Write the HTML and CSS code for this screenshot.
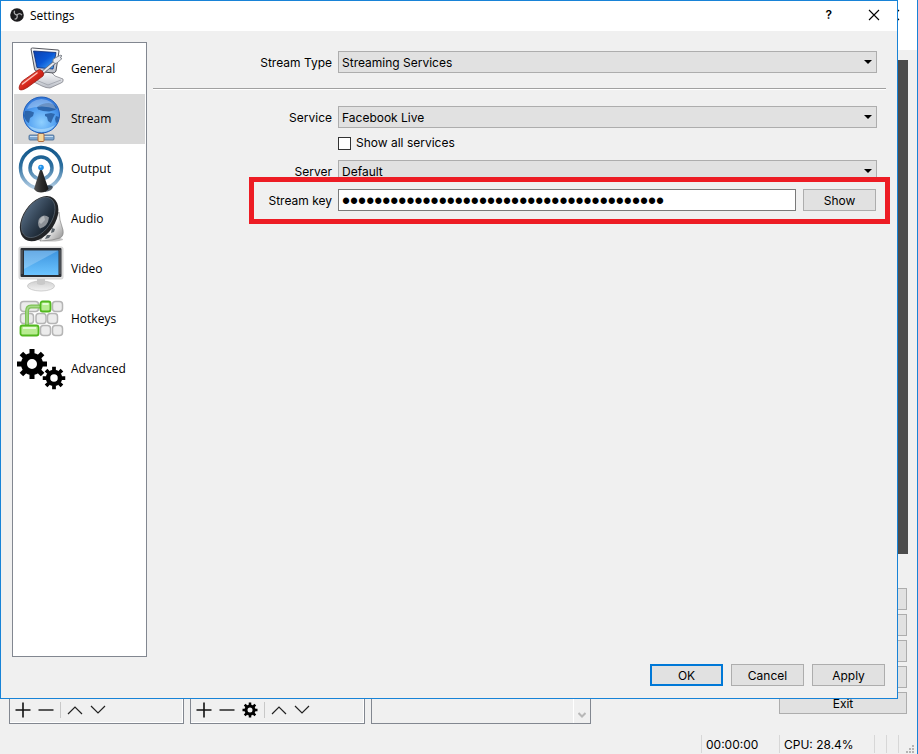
FILE: index.html
```html
<!DOCTYPE html>
<html lang="en">
<head>
    <meta charset="UTF-8">
    <meta name="viewport" content="width=device-width, initial-scale=1.0">
    <title>Settings</title>
    <link rel="stylesheet" href="styles.css">
</head>
<body>
    <!-- Shared shapes -->
    <svg class="sprites" width="0" height="0" aria-hidden="true">
        <symbol id="gear" viewBox="-16 -16 32 32">
            <circle r="8" fill="none" stroke="#000" stroke-width="6"/>
            <path d="M0-15V-10M0 15V10M-15 0H-10M15 0H10M-10.6-10.6L-7-7M10.6 10.6L7 7M-10.6 10.6L-7 7M10.6-10.6L7-7" stroke="#000" stroke-width="5"/>
        </symbol>
        <symbol id="plus" viewBox="0 0 16 16"><path d="M8 .5v15M.5 8h15" stroke="#111" stroke-width="1.6"/></symbol>
        <symbol id="minus" viewBox="0 0 16 16"><path d="M.5 8h15" stroke="#333" stroke-width="1.6"/></symbol>
        <symbol id="up" viewBox="0 0 16 16"><path d="M1 12l7-7 7 7" fill="none" stroke="#222" stroke-width="1.2"/></symbol>
        <symbol id="down" viewBox="0 0 16 16"><path d="M1 4l7 7 7-7" fill="none" stroke="#222" stroke-width="1.2"/></symbol>
        <symbol id="cross" viewBox="0 0 12 12"><path d="M1 1l10 10M11 1L1 11" stroke="#000" stroke-width="1.1"/></symbol>
    </svg>

    <!-- Main window, behind the dialog -->
    <div class="main-window">
        <div class="main-title">
            <button class="icon-btn" aria-label="Close main window"><svg width="12" height="12"><use href="#cross"/></svg></button>
        </div>
        <div class="preview"></div>
        <div class="docks">
            <div class="dock">
                <div class="toolbar">
                    <button class="icon-btn" aria-label="Add scene"><svg width="16" height="16"><use href="#plus"/></svg></button>
                    <button class="icon-btn" aria-label="Remove scene"><svg width="16" height="16"><use href="#minus"/></svg></button>
                    <span class="tool-sep"></span>
                    <button class="icon-btn" aria-label="Move scene up"><svg width="16" height="16"><use href="#up"/></svg></button>
                    <button class="icon-btn" aria-label="Move scene down"><svg width="16" height="16"><use href="#down"/></svg></button>
                </div>
            </div>
            <div class="dock">
                <div class="toolbar">
                    <button class="icon-btn" aria-label="Add source"><svg width="16" height="16"><use href="#plus"/></svg></button>
                    <button class="icon-btn" aria-label="Remove source"><svg width="16" height="16"><use href="#minus"/></svg></button>
                    <button class="icon-btn" aria-label="Source properties"><svg width="16" height="16"><use href="#gear"/></svg></button>
                    <span class="tool-sep"></span>
                    <button class="icon-btn" aria-label="Move source up"><svg width="16" height="16"><use href="#up"/></svg></button>
                    <button class="icon-btn" aria-label="Move source down"><svg width="16" height="16"><use href="#down"/></svg></button>
                </div>
            </div>
            <div class="dock mixer">
                <div class="scroll-track">
                    <svg width="8" height="6" viewBox="0 0 8 6"><path d="M.5 1L4 4.5 7.5 1" fill="none" stroke="#b8b8b8" stroke-width="2"/></svg>
                </div>
            </div>
            <div class="controls">
                <button class="btn" aria-label="Start Streaming"></button>
                <button class="btn" aria-label="Start Recording"></button>
                <button class="btn" aria-label="Studio Mode"></button>
                <button class="btn" aria-label="Open Settings"></button>
                <button class="btn">Exit</button>
            </div>
        </div>
        <footer class="statusbar">
            <span class="status time">00:00:00</span>
            <span class="status cpu">CPU: 28.4%</span>
            <span class="status slot"></span>
            <span class="status slot"></span>
            <span class="status grip">
                <svg width="8" height="8" viewBox="0 0 8 8" fill="#b4b4b4"><path d="M6 0h2v2H6zM3 3h2v2H3zM6 3h2v2H6zM0 6h2v2H0zM3 6h2v2H3zM6 6h2v2H6z"/></svg>
            </span>
        </footer>
    </div>

    <!-- Settings dialog -->
    <div class="dialog" role="dialog" aria-labelledby="dialog-title">
        <header class="titlebar">
            <svg width="14" height="14" viewBox="0 0 14 14">
                <circle cx="7" cy="7" r="6.8" fill="#1c1b1d"/>
                <g fill="none" stroke="#a9a9ab" stroke-width="1.3">
                    <path d="M7 7C4.600 6.500 3.600 4.800 4.600 2.800"/>
                    <path d="M7 7C4.600 6.500 3.600 4.800 4.600 2.800" transform="rotate(120 7 7)"/>
                    <path d="M7 7C4.600 6.500 3.600 4.800 4.600 2.800" transform="rotate(240 7 7)"/>
                </g>
            </svg>
            <h1 id="dialog-title">Settings</h1>
            <button class="icon-btn help" aria-label="Help">?</button>
            <button class="icon-btn" aria-label="Close"><svg width="12" height="12"><use href="#cross"/></svg></button>
        </header>

        <div class="dialog-body">
            <nav class="sidebar">
                <a href="#general">
                    <svg width="50" height="50" viewBox="0 0 50 50">
                        <defs>
                            <linearGradient id="scr" x1="0" y1="0" x2="1" y2="1"><stop offset="0" stop-color="#0b3fae"/><stop offset=".5" stop-color="#0a58d6"/><stop offset="1" stop-color="#4fb4ff"/></linearGradient>
                            <linearGradient id="shell" x1="0" y1="0" x2="0" y2="1"><stop offset="0" stop-color="#fff"/><stop offset="1" stop-color="#b9bdc6"/></linearGradient>
                            <linearGradient id="red" x1="0" y1="0" x2="1" y2="1"><stop offset="0" stop-color="#f58a7c"/><stop offset=".5" stop-color="#d8281c"/><stop offset="1" stop-color="#8f0f0a"/></linearGradient>
                        </defs>
                        <path d="M26 30l8-3 5 5 8 3q1 3-2 4l-11 5q-4 0-8-2l-8-4z" fill="url(#shell)" stroke="#85878e" stroke-width=".8"/>
                        <path d="M20 36l12 5 13-5" fill="none" stroke="#9da1aa" stroke-width=".8"/>
                        <path d="M15 5q0-1 1.500-1L42 6q1 0 1 1l-3 20q-1 2-3 2l-17-2q-1 0-1.500-2z" fill="url(#shell)" stroke="#55575e"/>
                        <path d="M17.500 7L40 8.500 37 25l-16-1.500z" fill="url(#scr)" stroke="#0a2c78" stroke-width=".8"/>
                        <path d="M26 29l13-11" stroke="#666a73" stroke-width="3.500"/>
                        <path d="M26 29l13-11" stroke="#e6e8ee" stroke-width="2"/>
                        <path d="M37 18q-1-3 2-4l6-3 1 1-2 1.500 2 1-5 4.500q-2 1.500-4-1z" fill="#e9ebf0" stroke="#6f737c" stroke-width=".8"/>
                        <path d="M21.500 26.500q2-2 4 0l1.500 1.500q1.500 2 0 4L12 43q-6 4-8.500 2.500-1.500-3 3-8.500z" fill="url(#red)" stroke="#a01810" stroke-width=".8"/>
                        <path d="M6.500 40L21 29" stroke="#ffc4bb" stroke-width="1.500" stroke-linecap="round"/>
                    </svg>
                    General
                </a>
                <a href="#stream" class="active" aria-current="page">
                    <svg width="50" height="50" viewBox="0 0 50 50">
                        <defs>
                            <radialGradient id="globe" cx=".5" cy=".7" r=".7"><stop offset="0" stop-color="#8fd0ff"/><stop offset=".6" stop-color="#4f9df0"/><stop offset="1" stop-color="#2f73d6"/></radialGradient>
                        </defs>
                        <path d="M23 38h5v5h-5z" fill="#5580b0"/>
                        <rect x="13" y="41" width="25" height="5" rx="1" fill="#7ea6cf" stroke="#3f6590" stroke-width=".8"/>
                        <path d="M14 42.500h23" stroke="#c8def2"/>
                        <rect x="22" y="39.500" width="6" height="8" rx="1" fill="#f4d69a" stroke="#b06a3a"/>
                        <circle cx="25.500" cy="21" r="18" fill="url(#globe)" stroke="#1f5cb8"/>
                        <path d="M9 17q5-1 9 1.500l-1 3.500-3 2-1 5q-3-1-5-7zM21 13q5-4 12-4 6 1 8 5l-2 2-6 1.500-6-.5-5-1.500zM29 20l6-1 4 1-2 4-2 5-3-2-1-4-2-1zM40 22l3 1-1 5-2 1-1-4z" fill="#24599c" opacity=".8"/>
                        <path d="M11 15q3-9 14.500-10Q37 6 40 15q-14-5-29 0z" fill="#fff" opacity=".3"/>
                        <path d="M12 31q13 8 27 0-4 7-13.500 7T12 31z" fill="#c8ecff" opacity=".5"/>
                    </svg>
                    Stream
                </a>
                <a href="#output">
                    <svg width="50" height="50" viewBox="0 0 50 50">
                        <defs>
                            <linearGradient id="ring" gradientUnits="userSpaceOnUse" x1="0" y1="2" x2="0" y2="46"><stop offset="0" stop-color="#0f5488"/><stop offset=".45" stop-color="#2d6f9f"/><stop offset="1" stop-color="#bdd5ea"/></linearGradient>
                            <linearGradient id="cone"><stop offset="0" stop-color="#555"/><stop offset=".5" stop-color="#2c2c2c"/><stop offset="1" stop-color="#161616"/></linearGradient>
                        </defs>
                        <circle cx="25" cy="24" r="20.500" fill="none" stroke="url(#ring)" stroke-width="3.500"/>
                        <circle cx="25" cy="24" r="11" fill="none" stroke="url(#ring)" stroke-width="3.500"/>
                        <path d="M28 42q8-2 9 1-1 4-8 5z" fill="#1c2a38" opacity=".75"/>
                        <path d="M24 26h2l6.500 19q-3 3.500-7.500 3.500T18 45z" fill="url(#cone)"/>
                        <circle cx="25" cy="23.500" r="2.800" fill="#1f8fe8"/>
                        <circle cx="24.500" cy="22.800" r="1" fill="#8fd2ff"/>
                    </svg>
                    Output
                </a>
                <a href="#audio">
                    <svg width="50" height="50" viewBox="0 0 50 50">
                        <defs>
                            <linearGradient id="spk" x1="0" y1="0" x2="1" y2="0"><stop offset="0" stop-color="#4e6379"/><stop offset=".6" stop-color="#2b3a4a"/><stop offset="1" stop-color="#18222c"/></linearGradient>
                            <linearGradient id="metal" x1="0" y1="0" x2="1" y2="1"><stop offset="0" stop-color="#777"/><stop offset=".5" stop-color="#f2f2f2"/><stop offset="1" stop-color="#8a8a8a"/></linearGradient>
                        </defs>
                        <ellipse cx="34" cy="45.500" rx="13" ry="2" fill="#999" opacity=".6"/>
                        <path d="M43 18l1 8 3 10q1 6-3 8l-8 2-12 1z" fill="url(#metal)" stroke="#777" stroke-width=".6"/>
                        <path d="M36 34l3 1-1 3-3 1zM31 41l4 0-2 3-4 1z" fill="#5b646b"/>
                        <g transform="rotate(34 23 24)">
                            <ellipse cx="23.500" cy="24.500" rx="16" ry="25" fill="#222427"/>
                            <ellipse cx="22" cy="24" rx="13.500" ry="22.500" fill="url(#spk)" stroke="#5a6672" stroke-width=".7"/>
                        </g>
                        <path d="M22 29q0-6 6-7.500 3 0 5 2-1 9-9 11-2-2-2-5.500z" fill="#8d9298"/>
                        <path d="M23 28q1-5 5-6l1 4-4 4z" fill="#b3b7bb"/>
                    </svg>
                    Audio
                </a>
                <a href="#video">
                    <svg width="50" height="50" viewBox="0 0 50 50">
                        <defs>
                            <linearGradient id="lcd" x1="0" y1="0" x2="0" y2="1"><stop offset="0" stop-color="#3d94de"/><stop offset="1" stop-color="#6cc4ff"/></linearGradient>
                            <linearGradient id="foot" x1="0" y1="0" x2="0" y2="1"><stop offset="0" stop-color="#cfcfcf"/><stop offset="1" stop-color="#f2f2f2"/></linearGradient>
                        </defs>
                        <ellipse cx="25" cy="42" rx="13.500" ry="5" fill="url(#foot)" stroke="#c4c4c4" stroke-width=".8"/>
                        <path d="M21 34h8v6q-4 2-8 0z" fill="#c9c9c9"/>
                        <rect x="3" y="3" width="44" height="32" rx="1.500" fill="#e3e3e3" stroke="#ccc" stroke-width=".8"/>
                        <rect x="4.500" y="4" width="41" height="29" rx="1" fill="#2b2f35"/>
                        <path d="M6 6v24M44 6v24" stroke="#686c72"/>
                        <rect x="8" y="6.500" width="34.500" height="24.500" fill="url(#lcd)"/>
                        <path d="M8 6.500h34.500L8 25z" fill="#fff" opacity=".22"/>
                    </svg>
                    Video
                </a>
                <a href="#hotkeys">
                    <svg width="50" height="50" viewBox="0 0 50 50">
                        <g fill="#ececec" stroke="#b5b5b5" stroke-width="1.500">
                            <rect x="4.500" y="7.500" width="18" height="10" rx="3"/>
                            <rect x="36.500" y="7.500" width="10" height="10" rx="3"/>
                            <rect x="4.500" y="19.500" width="13" height="10" rx="3"/>
                            <rect x="20" y="19.500" width="10" height="10" rx="3"/>
                            <rect x="31.500" y="19.500" width="10" height="10" rx="3"/>
                            <rect x="24.500" y="31.500" width="10" height="10" rx="3"/>
                            <rect x="36.500" y="31.500" width="10" height="10" rx="3"/>
                        </g>
                        <path d="M26 12.500H15q-4 0-4 5V33" fill="none" stroke="#7fc256" stroke-width="4"/>
                        <path d="M26 12.500H15q-4 0-4 5V33" fill="none" stroke="#a6d98a" stroke-width="1.500"/>
                        <g fill="#b9ec92" stroke="#52b81f" stroke-width="1.800">
                            <rect x="24.500" y="7.500" width="10" height="10" rx="2"/>
                            <rect x="4.500" y="31.500" width="18" height="10" rx="2"/>
                        </g>
                        <path d="M26.500 10h6M7 34h13" stroke="#e4fbd2" stroke-width="2"/>
                    </svg>
                    Hotkeys
                </a>
                <a href="#advanced">
                    <svg width="50" height="50" viewBox="0 0 50 50">
                        <use href="#gear" x="0" y="4" width="32" height="32"/>
                        <use href="#gear" x="26" y="22" width="24" height="24"/>
                    </svg>
                    Advanced
                </a>
            </nav>

            <main class="pane">
                <div class="form-row">
                    <label for="stream-type">Stream Type</label>
                    <div class="select-box">
                        <select id="stream-type"><option>Streaming Services</option></select>
                    </div>
                </div>
                <hr>
                <div class="form-row">
                    <label for="service">Service</label>
                    <div class="select-box">
                        <select id="service"><option>Facebook Live</option></select>
                    </div>
                </div>
                <div class="form-row check-row">
                    <span></span>
                    <div class="check">
                        <input type="checkbox" id="show-all">
                        <label for="show-all">Show all services</label>
                    </div>
                </div>
                <div class="form-row">
                    <label for="server">Server</label>
                    <div class="select-box">
                        <select id="server"><option>Default</option></select>
                    </div>
                </div>
                <div class="form-row key-row">
                    <label for="stream-key">Stream key</label>
                    <div class="key-field">
                        <input type="password" id="stream-key" value="0123456789012345678901234567890123456789">
                        <button class="btn">Show</button>
                    </div>
                </div>
            </main>
        </div>

        <footer class="dialog-buttons">
            <button class="btn primary">OK</button>
            <button class="btn">Cancel</button>
            <button class="btn">Apply</button>
        </footer>
    </div>
</body>
</html>
```

FILE: styles.css
```css
* {
    box-sizing: border-box;
}

body {
    margin: 0;
    background: #f0f0f0;
    color: #000;
    font-family: Inter, "Noto Sans", sans-serif;
    font-size: 12px;
    line-height: 16px;
}

button,
input,
select {
    font: inherit;
    color: inherit;
    margin: 0;
}

.sprites {
    position: absolute;
}

/* Buttons */
.btn {
    height: 22px;
    min-width: 73px;
    padding: 1px 8px 0;
    background: #e1e1e1;
    border: 1px solid #adadad;
    line-height: 20px;
}

.btn.primary {
    border: 2px solid #0078d7;
    line-height: 18px;
}

.icon-btn {
    display: flex;
    padding: 0;
    border: none;
    background: none;
}

/* Main window */
.main-window {
    display: flex;
    flex-direction: column;
    min-height: 100vh;
    border-right: 1px solid #1883d7;
}

.main-title {
    display: flex;
    justify-content: flex-end;
    height: 50px;
    padding: 9px 17px 0 0;
    background: #fff;
}

.preview {
    flex: 1;
    margin: 10px 9px 0;
    background: #4c4c4c;
}

.docks {
    display: grid;
    grid-template-columns: 175fr 175fr 220fr 176fr 128px;
    gap: 6px;
    margin: 16px 10px 0 9px;
    height: 154px;
}

.dock {
    display: flex;
    align-items: flex-end;
    border: 1px solid #828790;
}

.toolbar {
    display: flex;
    align-items: center;
    gap: 7px;
    flex: 1;
    height: 26px;
    padding: 0 5px;
    border: 1px solid #fff;
    border-width: 0 1px 1px 0;
}

.tool-sep {
    width: 1px;
    height: 16px;
    margin: 0 -1px;
    background: #c8c8c8;
}

.mixer {
    align-items: stretch;
    justify-content: flex-end;
}

.scroll-track {
    display: flex;
    align-items: flex-end;
    justify-content: center;
    width: 17px;
    padding-bottom: 5px;
    border-left: 1px solid #fff;
}

.controls {
    grid-column: 5;
    display: flex;
    flex-direction: column;
    gap: 4px;
    padding-top: 18px;
}

.statusbar {
    display: flex;
    justify-content: flex-end;
    align-items: center;
    height: 30px;
    padding-top: 10px;
}

.status {
    height: 18px;
    padding-left: 4px;
    border-left: 1px solid #d7d7d7;
    line-height: 20px;
}

.time {
    width: 78px;
}

.cpu {
    width: 95px;
}

.slot {
    width: 12px;
}

.grip {
    display: flex;
    align-items: flex-end;
    width: 19px;
    padding-left: 7px;
}

/* Settings dialog, on top of the main window */
.dialog {
    position: absolute;
    inset: 0 20px 55px 0;
    display: flex;
    flex-direction: column;
    background: #f0f0f0;
    border: 1px solid #1883d7;
}

.titlebar {
    display: flex;
    align-items: center;
    height: 30px;
    padding: 0 17px 2px 9px;
    background: #fff;
}

.titlebar h1 {
    flex: 1;
    margin: 2px 0 0 6px;
    font-family: "Open Sans", sans-serif;
    font-size: 12px;
    font-weight: 400;
}

.help {
    margin-right: 36px;
    font-weight: 600;
}

.dialog-body {
    flex: 1;
    display: flex;
    gap: 6px;
    padding: 11px 11px 0;
}

.sidebar {
    width: 135px;
    padding: 1px;
    background: #fff;
    border: 1px solid #828790;
    font-family: "Open Sans", sans-serif;
}

.sidebar a {
    display: flex;
    align-items: center;
    gap: 5px;
    height: 50px;
    padding-left: 2px;
    color: #000;
    line-height: 18px;
    text-decoration: none;
}

.sidebar a.active {
    background: #d9d9d9;
}

/* Form */
.pane {
    flex: 1;
    padding-top: 9px;
}

.pane hr {
    height: 2px;
    margin: 15px 0 16px;
    border: none;
    border-top: 1px solid #a0a0a0;
    background: #fff;
}

.form-row {
    display: grid;
    grid-template-columns: 179px 1fr;
    align-items: center;
    gap: 6px;
    margin-right: 9px;
}

.form-row > label {
    padding-top: 1px;
    text-align: right;
}

.check-row {
    margin-top: 7px;
    margin-bottom: 9px;
}

.select-box {
    position: relative;
}

.select-box::after {
    content: "";
    position: absolute;
    top: 9px;
    right: 5px;
    border: 4px solid transparent;
    border-top-color: #000;
    border-bottom: none;
    pointer-events: none;
}

select {
    display: block;
    width: 100%;
    height: 22px;
    padding: 1px 3px 0;
    appearance: none;
    background: #e1e1e1;
    border: 1px solid #adadad;
    border-radius: 0;
}

.check {
    display: flex;
    align-items: center;
    gap: 5px;
}

.check input {
    width: 13px;
    height: 13px;
    appearance: none;
    background: #fff;
    border: 1px solid #333;
}

.key-row {
    position: relative;
    margin-top: 7px;
}

/* Red frame drawing attention to the stream key */
.key-row::after {
    content: "";
    position: absolute;
    inset: -12px -13px -13px 96px;
    border: 5px solid #ed1c24;
    pointer-events: none;
}

.key-field {
    display: flex;
    gap: 7px;
    padding-right: 1px;
}

.key-field input {
    flex: 1;
    min-width: 0;
    height: 22px;
    padding: 2px 3px 0;
    background: #fff;
    border: 1px solid #7a7a7a;
    font-family: "Liberation Sans", sans-serif;
    font-size: 23px;
}

.dialog-buttons {
    display: flex;
    justify-content: flex-end;
    gap: 8px;
    padding: 7px 12px 12px;
}
```
